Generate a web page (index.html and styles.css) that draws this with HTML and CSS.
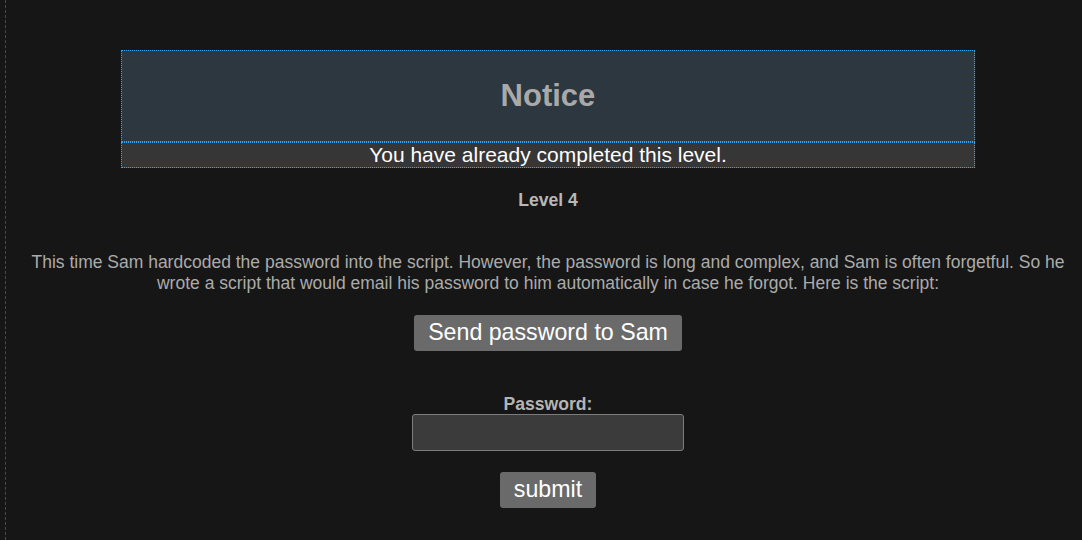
FILE: index.html
```html
<!DOCTYPE html>
<html lang="en">
<head>
<meta charset="utf-8">
<title>Level 4</title>
<link rel="stylesheet" href="styles.css">
</head>
<body>
<div class="page">
  <div class="notice">
    <div class="notice-head"><h1 class="notice-title">Notice</h1></div>
    <div class="notice-msg">You have already completed this level.</div>
  </div>
  <h4 class="level">Level 4</h4>
  <p class="desc">This time Sam hardcoded the password into the script. However, the password is long and complex, and Sam is often forgetful. So he wrote a script that would email his password to him automatically in case he forgot. Here is the script:</p>
  <div class="row"><button class="btn" type="button">Send password to Sam</button></div>
  <form class="pw-form">
    <label class="pw-label" for="pw">Password:</label>
    <input class="pw-input" id="pw" type="password">
    <button class="btn" type="button">submit</button>
  </form>
</div>
</body>
</html>
```

FILE: styles.css
```css
html, body {
  margin: 0;
  padding: 0;
  background: #161616;
}
body {
  font-family: "Liberation Sans", Arial, sans-serif;
  color: #aaaaaa;
}
.page {
  margin-left: 5px;
  border-left: 1px dashed #4a4a4a;
  padding: 50px 0 0 8px;
  min-height: 540px;
  box-sizing: border-box;
  text-align: center;
}
.notice {
  width: 80%;
  margin: 0 auto;
}
.notice-head {
  height: 90px;
  border: 1px dotted #3ba3f0;
  background: #2c373f;
  display: flex;
  align-items: center;
  justify-content: center;
}
.notice-title {
  margin: 0;
  font-size: 31px;
  line-height: 34px;
  font-weight: bold;
  color: #a9a9a9;
}
.notice-msg {
  border: 1px dotted #3ba3f0;
  background: #363636;
  color: #ffffff;
  font-size: 21px;
  line-height: 24px;
}
.level {
  margin: 22px 0 0;
  font-size: 17.6px;
  line-height: 20px;
  color: #b8b8b8;
}
.desc {
  margin: 42px 0 0;
  font-size: 17.5px;
  line-height: 21px;
  color: #ababab;
}
.row {
  margin-top: 21px;
}
.btn {
  font-family: "Liberation Sans", Arial, sans-serif;
  font-size: 23.2px;
  line-height: 28px;
  padding: 3px 14px 5px;
  border: none;
  border-radius: 3px;
  background: #6a6a6a;
  color: #ffffff;
  cursor: pointer;
}
.pw-form {
  margin-top: 43px;
  display: flex;
  flex-direction: column;
  align-items: center;
}
.pw-label {
  font-weight: bold;
  font-size: 17.6px;
  line-height: 20px;
  color: #b4b4b4;
}
.pw-input {
  width: 272px;
  height: 37px;
  box-sizing: border-box;
  background: #3b3b3b;
  border: 1px solid #7c7c7c;
  border-radius: 3px;
  color: #ffffff;
  margin: 0 0 21px;
}
```
